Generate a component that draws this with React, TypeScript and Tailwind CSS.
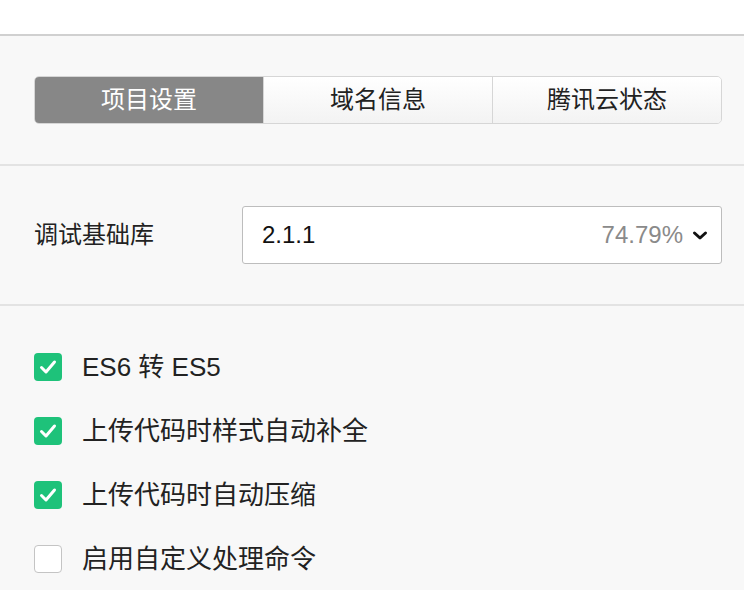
import React from "react";

const font = { fontFamily: '"Liberation Sans", "Noto Sans CJK SC", sans-serif' };

function Check({ checked }: { checked: boolean }) {
  return checked ? (
    <div className="w-[28px] h-[28px] rounded-[4px] bg-[#1ec27a] flex items-center justify-center shrink-0">
      <svg width="22" height="22" viewBox="0 0 22 22" fill="none">
        <path d="M4.5 11.5 L9 16 L17.5 6" stroke="white" strokeWidth="3" strokeLinecap="round" strokeLinejoin="round" />
      </svg>
    </div>
  ) : (
    <div className="w-[28px] h-[28px] rounded-[4px] bg-white border border-[#c4c4c4] shrink-0" />
  );
}

export default function App() {
  const tabs = ["项目设置", "域名信息", "腾讯云状态"];
  const items: [string, boolean][] = [
    ["ES6 转 ES5", true],
    ["上传代码时样式自动补全", true],
    ["上传代码时自动压缩", true],
    ["启用自定义处理命令", false],
  ];
  return (
    <div className="w-[744px] h-[590px] overflow-hidden bg-[#f8f8f8] text-[#222]" style={font}>
      <div className="h-[36px] bg-white border-b-2 border-[#d0d0d0]" />
      <div className="pl-[34px] pr-[22px] pt-[40px] pb-[40px] border-b-2 border-[#e3e3e3]">
        <div className="flex h-[48px] rounded-[5px] border border-[#d6d6d6] overflow-hidden">
          {tabs.map((t, i) => (
            <div
              key={t}
              className={
                i === 0
                  ? "flex-1 flex items-center justify-center bg-[#878787] text-white text-[24px]"
                  : "flex-1 flex items-center justify-center bg-gradient-to-b from-white to-[#f3f3f3] text-[#222] text-[24px] border-l border-[#d6d6d6]"
              }
            >
              {t}
            </div>
          ))}
        </div>
      </div>
      <div className="pl-[34px] pr-[22px] pt-[40px] pb-[40px] border-b-2 border-[#e3e3e3] flex items-center">
        <div className="w-[208px] text-[24px] text-[#222]">调试基础库</div>
        <div className="flex-1 h-[58px] bg-white border border-[#bdbdbd] rounded-[3px] flex items-center pl-[19px] pr-[12px]">
          <span className="text-[24px] text-[#111]">2.1.1</span>
          <span className="ml-auto text-[24px] text-[#8a8a8a]">74.79%</span>
          <svg className="ml-[8px]" width="18" height="18" viewBox="0 0 18 18" fill="none">
            <path d="M3.5 7 L9 12 L14.5 7" stroke="#111" strokeWidth="3" strokeLinecap="round" strokeLinejoin="round" />
          </svg>
        </div>
      </div>
      <div className="px-[34px] pt-[42px] flex flex-col gap-[26px]">
        {items.map(([label, c]) => (
          <div key={label} className="h-[38px] flex items-center gap-[20px]">
            <Check checked={c} />
            <span className="text-[26px] text-[#222]">{label}</span>
          </div>
        ))}
      </div>
    </div>
  );
}
